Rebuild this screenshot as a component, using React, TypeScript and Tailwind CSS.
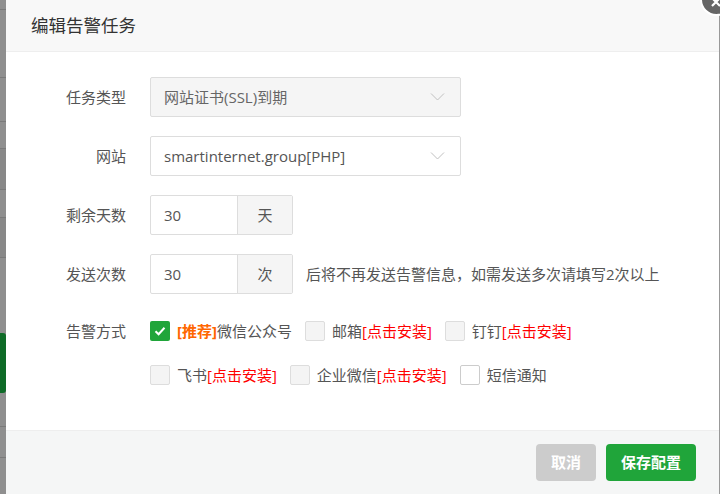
import React from 'react';

const font = { fontFamily: '"Open Sans", "Noto Sans CJK SC", sans-serif' };

const Chevron = () => (
  <svg width="15" height="9" viewBox="0 0 15 9" className="absolute right-[15px] top-1/2 -translate-y-1/2">
    <path d="M1 1 L7.5 7.5 L14 1" fill="none" stroke="#c0c0c0" strokeWidth="1" />
  </svg>
);

const Row = ({ label, children }: { label: string; children: React.ReactNode }) => (
  <div className="flex items-center h-[40px]">
    <div className="w-[120px] text-right text-[15px] text-[#555]">{label}</div>
    <div className="ml-[24px] flex items-center">{children}</div>
  </div>
);

const Check = ({ checked, white }: { checked?: boolean; white?: boolean }) =>
  checked ? (
    <span className="w-[20px] h-[20px] rounded-[2px] bg-[#20a53a] flex items-center justify-center">
      <svg width="14" height="14" viewBox="0 0 14 14">
        <path d="M2.5 7.2 L5.6 10.2 L11.5 3.8" fill="none" stroke="#fff" strokeWidth="2" />
      </svg>
    </span>
  ) : (
    <span
      className={
        white
          ? 'w-[20px] h-[20px] rounded-[2px] border border-[#ccc] bg-white'
          : 'w-[20px] h-[20px] rounded-[2px] border border-[#ddd] bg-[#f4f4f4]'
      }
    />
  );

const Option = ({ checked, white, children }: { checked?: boolean; white?: boolean; children: React.ReactNode }) => (
  <div className="flex items-center mr-[13px]">
    <Check checked={checked} white={white} />
    <span className="ml-[7px] text-[15px] text-[#555]">{children}</span>
  </div>
);

const Install = () => <span className="text-[#ff0000]">[点击安装]</span>;

export default function App() {
  return (
    <div className="w-[720px] h-[494px] flex overflow-hidden bg-white" style={font}>
      {/* dimmed page behind the dialog */}
      <div className="w-[6px] h-full bg-[#8f8f8f] flex flex-col shrink-0">
        <div className="h-[10px] border-b border-[#7a7a7a]" />
        <div className="h-[68px] border-b border-[#7a7a7a]" />
        <div className="h-[44px] border-b border-[#7a7a7a]" />
        <div className="h-[26px]" />
        <div className="h-[42px] border-y border-[#7a7a7a] bg-[#888]" />
        <div className="h-[27px]" />
        <div className="h-[41px] border-y border-[#7a7a7a] bg-[#888]" />
        <div className="h-[75px]" />
        <div className="h-[60px] bg-[#0e6b27] rounded-r-[3px]" />
        <div className="h-[34px] border-b border-[#7a7a7a]" />
        <div className="h-[31px] border-b border-[#7a7a7a]" />
      </div>

      <div className="relative flex-1 flex flex-col border-r border-[#999]">
        <div className="h-[52px] bg-[#f8f8f8] border-b border-[#eee] flex items-center pl-[25px] shrink-0">
          <span className="text-[17.5px] text-[#333]">编辑告警任务</span>
        </div>

        <div className="flex-1 pt-[25px] flex flex-col">
          <div className="flex flex-col gap-[19px]">
            <Row label="任务类型">
              <div className="relative w-[311px] h-[40px] border border-[#ddd] rounded-[2px] bg-[#f5f5f5] flex items-center pl-[13px] text-[15px] text-[#666]">
                网站证书(SSL)到期
                <Chevron />
              </div>
            </Row>
            <Row label="网站">
              <div className="relative w-[311px] h-[40px] border border-[#ddd] rounded-[2px] bg-white flex items-center pl-[13px] text-[15px] text-[#555]">
                smartinternet.group[PHP]
                <Chevron />
              </div>
            </Row>
            <Row label="剩余天数">
              <div className="flex h-[40px] border border-[#ddd] rounded-[2px]">
                <div className="w-[86px] flex items-center pl-[13px] text-[15px] text-[#555]">30</div>
                <div className="w-[55px] bg-[#f5f5f5] border-l border-[#ddd] flex items-center justify-center text-[15px] text-[#555]">天</div>
              </div>
            </Row>
            <Row label="发送次数">
              <div className="flex h-[40px] border border-[#ddd] rounded-[2px]">
                <div className="w-[86px] flex items-center pl-[13px] text-[15px] text-[#555]">30</div>
                <div className="w-[55px] bg-[#f5f5f5] border-l border-[#ddd] flex items-center justify-center text-[15px] text-[#555]">次</div>
              </div>
              <span className="ml-[13px] text-[15px] text-[#555]">后将不再发送告警信息，如需发送多次请填写2次以上</span>
            </Row>
          </div>

          <div className="flex mt-[27px]">
            <div className="w-[120px] text-right text-[15px] text-[#555] leading-[20px]">告警方式</div>
            <div className="ml-[24px] flex flex-col gap-[24px]">
              <div className="flex items-center h-[20px]">
                <Option checked>
                  <span className="text-[#ff6600] font-bold">[推荐]</span>微信公众号
                </Option>
                <Option>
                  邮箱<Install />
                </Option>
                <Option>
                  钉钉<Install />
                </Option>
              </div>
              <div className="flex items-center h-[20px]">
                <Option>
                  飞书<Install />
                </Option>
                <Option>
                  企业微信<Install />
                </Option>
                <Option white>短信通知</Option>
              </div>
            </div>
          </div>
        </div>

        <div className="h-[64px] bg-[#f5f6f6] border-t border-[#eee] flex items-center justify-end pr-[23px] gap-[10px] shrink-0">
          <button className="w-[60px] h-[37px] rounded-[4px] bg-[#cccccc] text-white text-[15px] font-bold">取消</button>
          <button className="w-[90px] h-[37px] rounded-[4px] bg-[#20a53a] text-white text-[15px] font-bold">保存配置</button>
        </div>

        <div className="absolute -right-[14px] -top-[17px] w-[33px] h-[33px] rounded-full bg-[#666] border-[2px] border-white flex items-center justify-center">
          <svg width="14" height="14" viewBox="0 0 14 14" className="mt-[4px] -ml-[2px]">
            <path d="M3 3 L11 11 M11 3 L3 11" stroke="#fff" strokeWidth="2.2" />
          </svg>
        </div>
      </div>
    </div>
  );
}
